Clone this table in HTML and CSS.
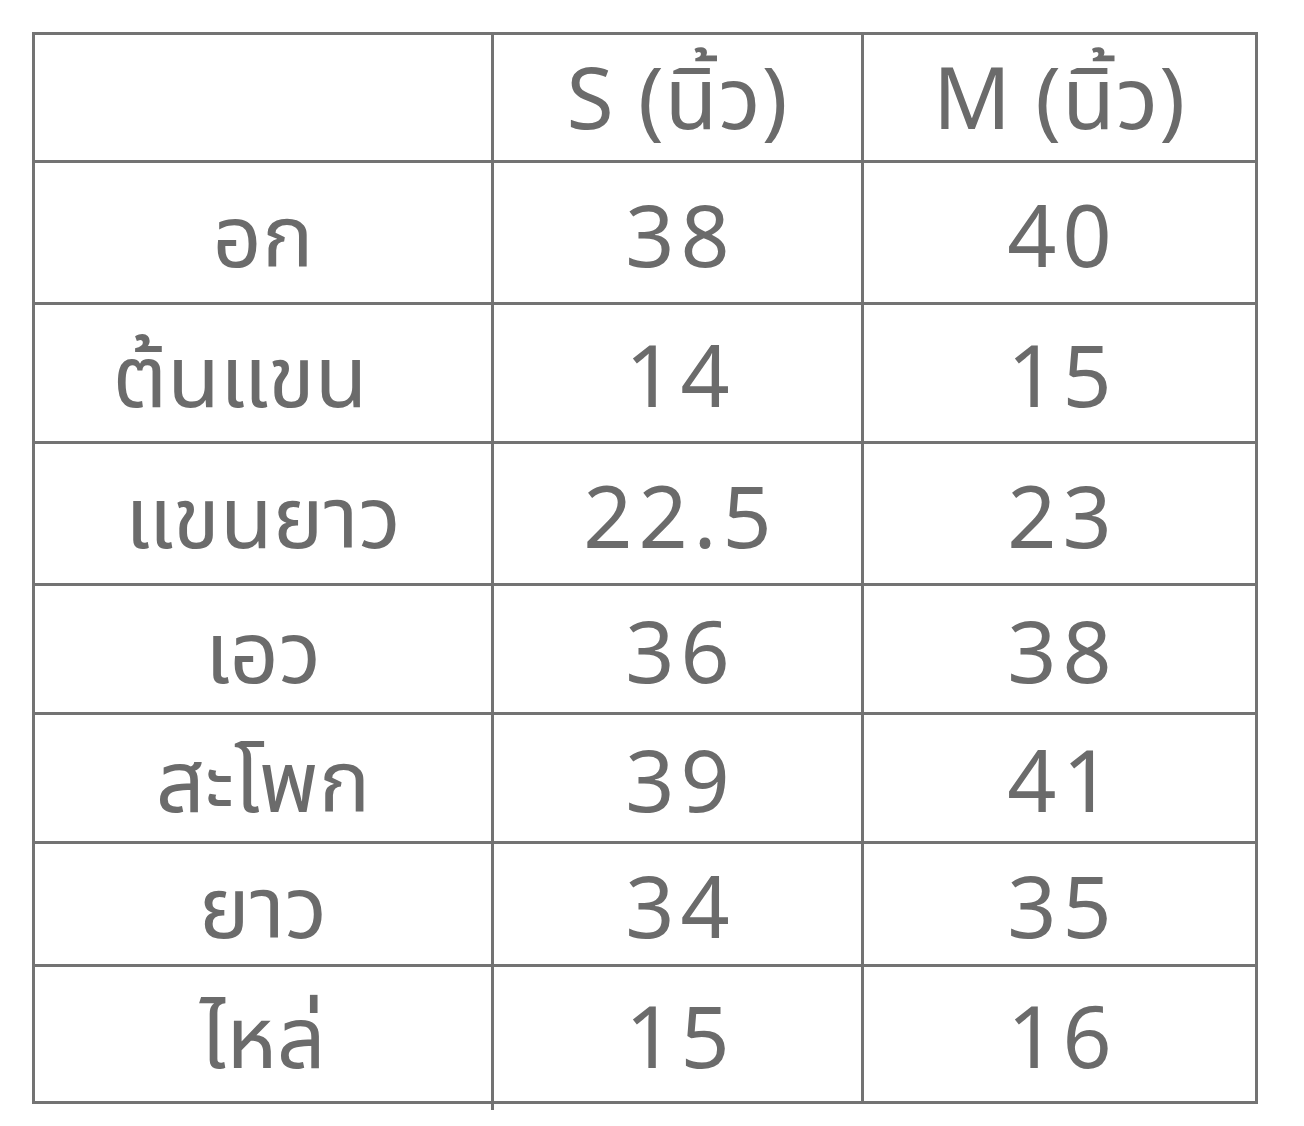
FILE: index.html
```html
<!DOCTYPE html>
<html lang="th">
<head>
<meta charset="utf-8">
<title>ตารางขนาด</title>
<link rel="stylesheet" href="styles.css">
</head>
<body>
<div class="page">
  <div class="size-table">
    <div class="cell"></div>
    <div class="cell head">S (นิ้ว)</div>
    <div class="cell head">M (นิ้ว)</div>

    <div class="cell">อก</div>
    <div class="cell num">38</div>
    <div class="cell num">40</div>

    <div class="cell label-left">ต้นแขน</div>
    <div class="cell num">14</div>
    <div class="cell num">15</div>

    <div class="cell">แขนยาว</div>
    <div class="cell num">22.5</div>
    <div class="cell num">23</div>

    <div class="cell">เอว</div>
    <div class="cell num">36</div>
    <div class="cell num">38</div>

    <div class="cell">สะโพก</div>
    <div class="cell num">39</div>
    <div class="cell num">41</div>

    <div class="cell">ยาว</div>
    <div class="cell num">34</div>
    <div class="cell num">35</div>

    <div class="cell">ไหล่</div>
    <div class="cell num">15</div>
    <div class="cell num">16</div>
  </div>
</div>
</body>
</html>
```

FILE: styles.css
```css
html, body {
  margin: 0;
  padding: 0;
  background: #ffffff;
}

.page {
  width: 1304px;
  height: 1126px;
  padding: 32px 0 0 32px;
  box-sizing: border-box;
}

.size-table {
  position: relative;
  display: grid;
  width: 1226px;
  grid-template-columns: 456px 367px 391px;
  grid-template-rows: 125px 139px 136px 139px 126px 126px 120px 134px;
  gap: 3px;
  padding: 3px;
  box-sizing: border-box;
  background: #737373;
}

.size-table::after {
  content: "";
  position: absolute;
  left: 459px;
  top: 100%;
  width: 3px;
  height: 6px;
  background: #737373;
}

.cell {
  background: #ffffff;
  display: flex;
  align-items: center;
  justify-content: center;
  padding-top: 16px;
  box-sizing: border-box;
  font-family: "Noto Sans Thai", "Noto Sans", "DejaVu Sans", sans-serif;
  font-size: 86px;
  font-weight: 400;
  color: #6b6b6b;
  line-height: 1;
  white-space: nowrap;
}

.num {
  letter-spacing: 6px;
  text-indent: 6px;
}

.head {
  padding-top: 10px;
  letter-spacing: 1px;
}

.label-left {
  padding-right: 46px;
}
```
